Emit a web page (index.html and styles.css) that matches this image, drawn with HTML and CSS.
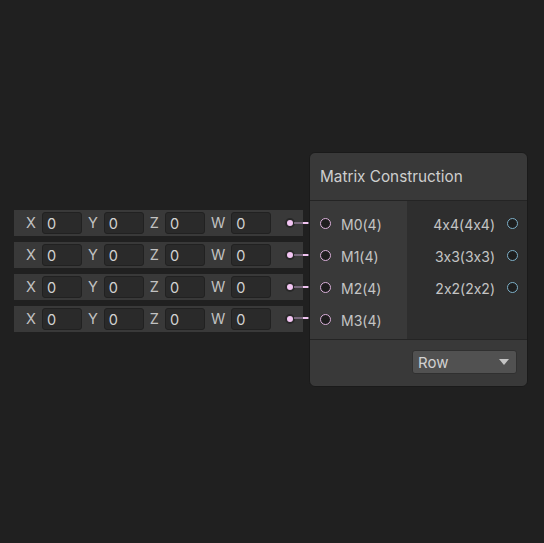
FILE: index.html
```html
<!DOCTYPE html>
<html>
<head>
<meta charset="utf-8">
<link rel="stylesheet" href="styles.css">
</head>
<body>
<div class="canvas">
  <div class="inline-inputs">
    <div class="bar">
      <span class="axis">X</span><span class="field">0</span>
      <span class="axis">Y</span><span class="field">0</span>
      <span class="axis">Z</span><span class="field">0</span>
      <span class="axis">W</span><span class="field">0</span>
      <span class="out-dot"></span>
    </div>
    <div class="bar">
      <span class="axis">X</span><span class="field">0</span>
      <span class="axis">Y</span><span class="field">0</span>
      <span class="axis">Z</span><span class="field">0</span>
      <span class="axis">W</span><span class="field">0</span>
      <span class="out-dot"></span>
    </div>
    <div class="bar">
      <span class="axis">X</span><span class="field">0</span>
      <span class="axis">Y</span><span class="field">0</span>
      <span class="axis">Z</span><span class="field">0</span>
      <span class="axis">W</span><span class="field">0</span>
      <span class="out-dot"></span>
    </div>
    <div class="bar">
      <span class="axis">X</span><span class="field">0</span>
      <span class="axis">Y</span><span class="field">0</span>
      <span class="axis">Z</span><span class="field">0</span>
      <span class="axis">W</span><span class="field">0</span>
      <span class="out-dot"></span>
    </div>
  </div>

  <svg class="wires" width="544" height="543" viewBox="0 0 544 543">
    <g stroke-width="2">
      <line x1="294" y1="223" x2="320" y2="223" stroke="#76677a"/>
      <line x1="303" y1="223" x2="308" y2="223" stroke="#f0c4f0"/>
      <line x1="294" y1="255" x2="320" y2="255" stroke="#76677a"/>
      <line x1="303" y1="255" x2="308" y2="255" stroke="#f0c4f0"/>
      <line x1="294" y1="287" x2="320" y2="287" stroke="#76677a"/>
      <line x1="303" y1="287" x2="308" y2="287" stroke="#f0c4f0"/>
      <line x1="294" y1="318" x2="320" y2="318" stroke="#76677a"/>
      <line x1="303" y1="318" x2="308" y2="318" stroke="#f0c4f0"/>
    </g>
  </svg>

  <div class="node">
    <div class="title">Matrix Construction</div>
    <div class="body">
      <div class="inputs">
        <div class="port in"><span class="ring"></span><span class="label">M0(4)</span></div>
        <div class="port in"><span class="ring"></span><span class="label">M1(4)</span></div>
        <div class="port in"><span class="ring"></span><span class="label">M2(4)</span></div>
        <div class="port in"><span class="ring"></span><span class="label">M3(4)</span></div>
      </div>
      <div class="outputs">
        <div class="port out"><span class="label">4x4(4x4)</span><span class="ring"></span></div>
        <div class="port out"><span class="label">3x3(3x3)</span><span class="ring"></span></div>
        <div class="port out"><span class="label">2x2(2x2)</span><span class="ring"></span></div>
      </div>
    </div>
    <div class="footer">
      <div class="dropdown"><span>Row</span><span class="arrow"></span></div>
    </div>
  </div>
</div>
</body>
</html>
```

FILE: styles.css
```css
* { box-sizing: border-box; }
html, body {
  margin: 0;
  background: #202020;
}
body {
  font-family: Inter, "Noto Sans", sans-serif;
  font-feature-settings: "calt" 0;
  color: #c4c4c4;
}
.canvas {
  position: relative;
  width: 544px;
  height: 543px;
  overflow: hidden;
}
.inline-inputs {
  position: absolute;
  left: 14px;
  top: 210px;
  display: flex;
  flex-direction: column;
  gap: 6px;
}
.bar {
  width: 289px;
  height: 26px;
  background: #393939;
  display: flex;
  align-items: center;
  padding-left: 6px;
}
.axis {
  font-size: 14.5px;
  padding: 0 6px;
  color: #c2c2c2;
  line-height: 1;
}
.field {
  width: 40px;
  height: 22px;
  background: #2a2a2a;
  border: 1px solid #212121;
  border-radius: 3px;
  font-size: 14.5px;
  color: #d2d2d2;
  padding-left: 4px;
  display: flex;
  align-items: center;
}
.out-dot {
  margin-left: auto;
  margin-right: 8px;
  width: 10px;
  height: 10px;
  border-radius: 50%;
  background: #f4c6f4;
  border: 2.5px solid #282828;
}
.wires {
  position: absolute;
  left: 0;
  top: 0;
}
.node {
  position: absolute;
  left: 309px;
  top: 152px;
  width: 219px;
  height: 235px;
  background: #393939;
  border: 1px solid #1a1a1a;
  border-radius: 6px;
  overflow: hidden;
  display: flex;
  flex-direction: column;
}
.title {
  height: 48px;
  padding-left: 10px;
  display: flex;
  align-items: center;
  font-size: 15.3px;
  color: #cecece;
  border-bottom: 1px solid #242424;
}
.body {
  display: flex;
  height: 139px;
  border-bottom: 1px solid #242424;
}
.inputs {
  width: 97px;
  background: #393939;
  padding-top: 7px;
}
.outputs {
  flex: 1;
  background: #2e2e2e;
  padding-top: 7px;
}
.port {
  height: 32px;
  display: flex;
  align-items: center;
  font-size: 14px;
  color: #c4c4c4;
}
.port.in {
  padding-left: 10px;
}
.port.in .label { margin-left: 10px; }
.port.out {
  justify-content: flex-end;
  padding-right: 9px;
}
.port.out .label { margin-right: 12px; }
.ring {
  width: 11px;
  height: 11px;
  border-radius: 50%;
  background: #1e1e1e;
  margin-top: -2px;
}
.port.in .ring { border: 1.5px solid #dab0da; }
.port.out .ring { border: 1.5px solid #7eb0c8; }
.footer {
  flex: 1;
  display: flex;
  justify-content: flex-end;
  align-items: flex-start;
  padding: 10px 10px 0 0;
}
.dropdown {
  width: 105px;
  height: 24px;
  background: #515151;
  border: 1px solid #303030;
  border-radius: 3px;
  display: flex;
  align-items: center;
  justify-content: space-between;
  padding: 0 7px 0 5px;
  font-size: 15px;
  color: #d2d2d2;
}
.arrow {
  width: 0;
  height: 0;
  border-left: 5px solid transparent;
  border-right: 5px solid transparent;
  border-top: 6px solid #c4c4c4;
}
```
